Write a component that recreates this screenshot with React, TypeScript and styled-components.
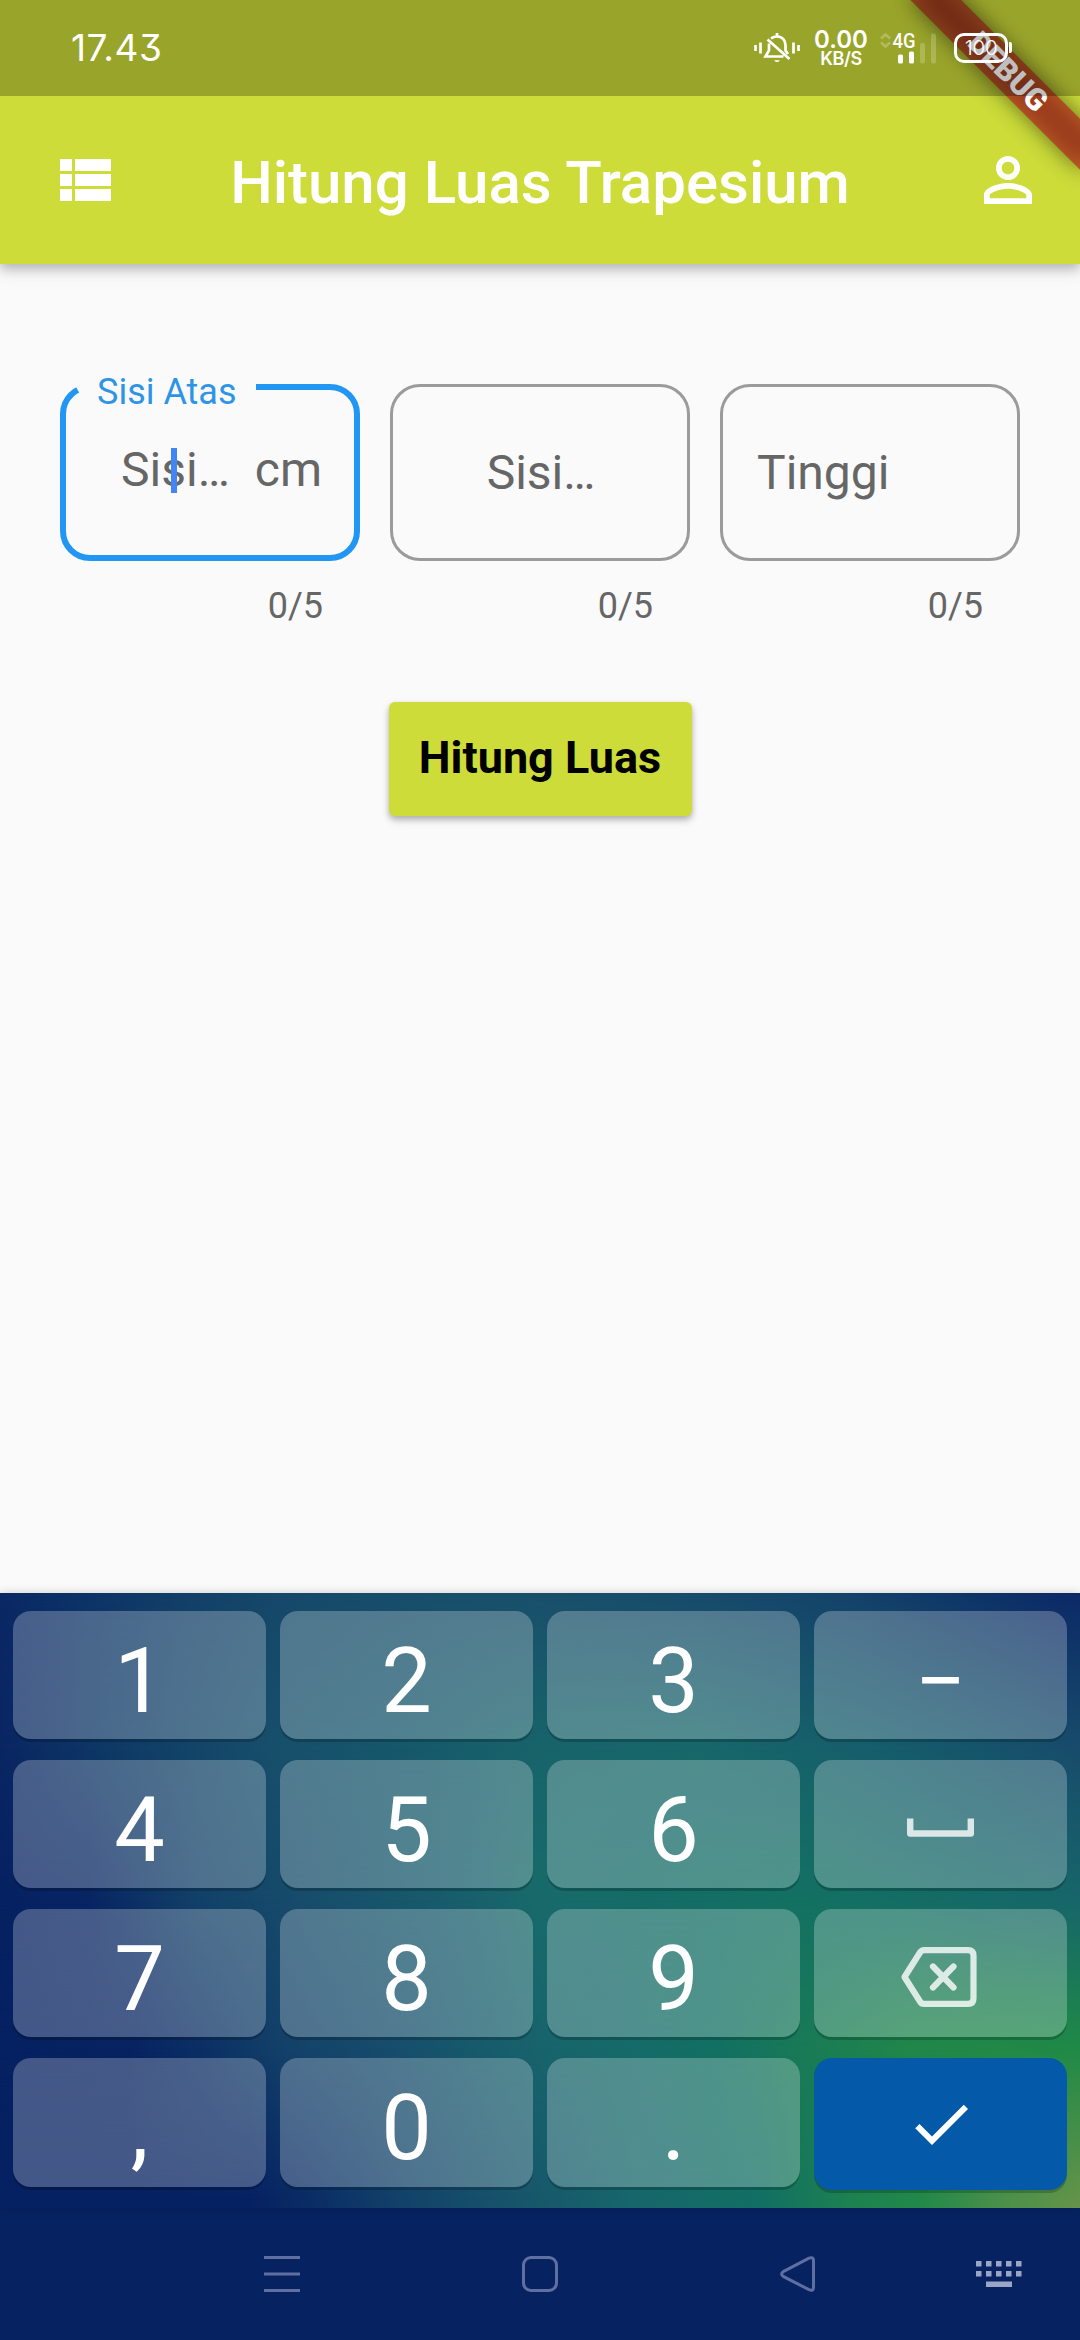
import React from "react";
import styled, { createGlobalStyle } from "styled-components";

const Global = createGlobalStyle`
  * { box-sizing: border-box; }
  html, body { margin: 0; padding: 0; background: #fafafa; }
  body { font-family: Roboto, "Noto Sans", sans-serif; }
  button { font-family: inherit; border: 0; padding: 0; margin: 0; }
  svg { display: block; }
`;

const Screen = styled.div`
  position: relative;
  width: 1080px;
  height: 2340px;
  overflow: hidden;
  display: flex;
  flex-direction: column;
  background: #fafafa;
`;

/* ---------- app bar ---------- */

const AppBar = styled.header`
  height: 264px;
  padding: 96px 36px 0 48px;
  display: flex;
  align-items: center;
  justify-content: space-between;
  background: #cddc39;
  box-shadow: 0 4px 10px rgba(0, 0, 0, 0.2), 0 9px 14px rgba(0, 0, 0, 0.1);
`;

const Title = styled.h1`
  margin: 0;
  padding: 6px 12px 0 0;
  font-size: 60px;
  line-height: 70px;
  font-weight: 500;
  color: #fff;
  white-space: nowrap;
`;

const MaterialIcon = styled.svg`
  width: 72px;
  height: 72px;
  fill: #fff;
`;

/* ---------- debug ribbon ---------- */

const RibbonCorner = styled.div`
  position: absolute;
  top: 0;
  left: 0;
  width: 1080px;
  height: 264px;
  overflow: hidden;
  pointer-events: none;
`;

const Ribbon = styled.div`
  position: absolute;
  left: 960px;
  top: 84px;
  width: 240px;
  height: 36px;
  display: flex;
  align-items: center;
  justify-content: center;
  transform-origin: 120px -84px;
  transform: rotate(45deg);
  color: #fff;
  font-size: 30.6px;
  line-height: 36px;
  font-weight: 900;

  &::before,
  &::after {
    content: "";
    position: absolute;
    inset: 0;
    z-index: -1;
  }
  &::before {
    background: rgba(0, 0, 0, 0.5);
    filter: blur(11px);
  }
  &::after {
    background: rgba(183, 28, 28, 0.63);
  }
`;

/* ---------- status bar ---------- */

const StatusBar = styled.div`
  position: absolute;
  inset: 0 0 auto 0;
  height: 96px;
  padding: 0 67px 0 71px;
  display: flex;
  align-items: center;
  justify-content: space-between;
  background: rgba(0, 0, 0, 0.25);
  color: #fff;
  font-family: Inter, Roboto, sans-serif;
`;

const Clock = styled.span`
  font-size: 37px;
  line-height: 44px;
  letter-spacing: 0.5px;
  font-feature-settings: "cv09";
`;

const StatusIcons = styled.div`
  display: flex;
  align-items: center;
`;

const NetSpeed = styled.div`
  width: 56px;
  margin-left: 13px;
  display: flex;
  flex-direction: column;
  align-items: center;
  font-weight: 600;
`;

const SpeedValue = styled.span`
  font-size: 24px;
  line-height: 19px;
`;

const SpeedUnit = styled.span`
  margin-top: 2px;
  font-size: 18px;
  line-height: 16px;
  letter-spacing: -0.4px;
`;

const Signal = styled.svg`
  width: 58px;
  height: 32px;
  margin: 0 17px 0 10px;
  overflow: visible;
`;

const Battery = styled.div`
  position: relative;
  width: 54px;
  height: 30px;
  margin-right: 5px;
  border: 3.5px solid #fff;
  border-radius: 10px;
  display: flex;
  align-items: center;
  justify-content: center;
  font-size: 20.5px;
  line-height: 20px;
  font-weight: 300;
  letter-spacing: -0.3px;

  &::after {
    content: "";
    position: absolute;
    right: -7px;
    top: 6px;
    width: 3px;
    height: 11px;
    border-radius: 0 2px 2px 0;
    background: #fff;
  }
`;

/* ---------- form ---------- */

const Form = styled.main`
  flex: 1;
  padding: 120px 60px 0;
  display: flex;
  flex-direction: column;
  align-items: center;
`;

const Fields = styled.div`
  width: 100%;
  display: grid;
  grid-template-columns: repeat(3, 300px);
  gap: 30px;
`;

const Field = styled.label`
  position: relative;
  display: flex;
  flex-direction: column;
`;

const Outline = styled.span<{ $active?: boolean }>`
  height: 177px;
  padding: ${(p) => (p.$active ? "0 32px 6px 30px" : "0 32px 0 34px")};
  display: flex;
  align-items: center;
  border: ${(p) => (p.$active ? "6px solid #2196f3" : "3px solid #9b9b9b")};
  border-radius: 30px;
  color: #666;
  font-size: 48px;
  line-height: 56px;
`;

const Hint = styled.span<{ $centered?: boolean; $shift?: number }>`
  position: relative;
  flex: 1;
  padding-left: ${(p) => p.$shift ?? 0}px;
  text-align: ${(p) => (p.$centered ? "center" : "left")};
`;

const Caret = styled.i`
  position: absolute;
  left: calc(50% - 3px);
  top: 6px;
  width: 6px;
  height: 45px;
  background: #4285f4;
`;

const Suffix = styled.span`
  margin-left: 3px;
`;

const FloatingLabel = styled.span`
  position: absolute;
  left: 16px;
  top: -13px;
  width: 180px;
  height: 42px;
  padding-left: 21px;
  background: #fafafa;
  clip-path: polygon(0 0, 0 16px, 4px 23px, 4px 42px, 100% 42px, 100% 0);
  color: #2e95e6;
  font-size: 36px;
  line-height: 42px;
`;

const Counter = styled.span`
  margin-top: 24px;
  padding-right: 37px;
  text-align: right;
  color: #666;
  font-size: 36px;
  line-height: 42px;
`;

const SubmitButton = styled.button`
  width: 303px;
  height: 114px;
  margin-top: 75px;
  padding-bottom: 3px;
  border-radius: 6px;
  background: #cddc39;
  box-shadow: 0 3px 6px rgba(0, 0, 0, 0.26), 0 6px 9px rgba(0, 0, 0, 0.08);
  color: #000;
  font-size: 45px;
  line-height: 53px;
  font-weight: 700;
  white-space: nowrap;
`;

/* ---------- keyboard ---------- */

const Keyboard = styled.section`
  position: relative;
  isolation: isolate;
  height: 615px;
  padding: 18px 13px 0;
  display: grid;
  grid-template-columns: repeat(4, 253px);
  grid-template-rows: 128px 128px 128px 129px;
  column-gap: 14px;
  row-gap: 21px;
  box-shadow: 0 0 9px rgba(0, 0, 0, 0.18);
`;

const Glow = styled.div<{ $stops: string; $from: number; $to: number }>`
  position: absolute;
  inset: 0;
  z-index: -1;
  background: linear-gradient(90deg, ${(p) => p.$stops});
  ${(p) =>
    p.$to > 0 &&
    `mask-image: linear-gradient(180deg, transparent ${p.$from}px, #000 ${p.$to}px);`}
`;

const Key = styled.button<{ $primary?: boolean }>`
  height: ${(p) => (p.$primary ? "132px" : "100%")};
  display: flex;
  align-items: center;
  justify-content: center;
  border-radius: 18px;
  background: ${(p) => (p.$primary ? "#045aa8" : "rgba(255, 255, 255, 0.25)")};
  box-shadow: 0 3px 0 rgba(0, 0, 0, 0.2);
  color: #fff;
  font-size: 90px;
  line-height: 106px;
  padding-top: ${(p) => (p.$primary ? "0" : "13px")};
`;

const SpaceIcon = styled.svg`
  width: 67px;
  height: 19px;
  margin-top: -7px;
  fill: none;
  stroke: rgba(255, 255, 255, 0.8);
  stroke-width: 6.4;
`;

const DeleteIcon = styled.svg`
  width: 78px;
  height: 60px;
  margin: -5px 3px 0 0;
  fill: none;
  stroke: rgba(255, 255, 255, 0.8);
  stroke-width: 6.2;
  stroke-linejoin: round;
  stroke-linecap: round;
`;

/* ---------- system navigation ---------- */

const NavBar = styled.nav`
  height: 132px;
  padding: 0 58px 0 264px;
  display: flex;
  align-items: center;
  background: #072261;
`;

const NavIcon = styled.svg<{ $gap: number }>`
  width: 36px;
  height: 36px;
  margin-right: ${(p) => p.$gap}px;
  fill: none;
  stroke: #5f6fa1;
  stroke-width: 3;
`;

const KeyboardIcon = styled.svg`
  width: 46px;
  height: 27px;
  fill: #9ba6c6;
`;

const glowRows: { y: number; stops: [string, number][] }[] = [
  {
    y: 0,
    stops: [["#0a2864", 0], ["#0b3066", 60], ["#123f68", 180], ["#164a6a", 300], ["#184f6b", 450], ["#194f6b", 540], ["#174b6b", 700], ["#14426a", 850], ["#0f3768", 950], ["#0c2a67", 1060]],
  },
  {
    y: 157,
    stops: [["#092662", 0], ["#0f3c66", 130], ["#174f6b", 270], ["#16586b", 400], ["#18646a", 540], ["#17686a", 700], ["#165e6b", 870], ["#16536b", 1000], ["#184c6b", 1080]],
  },
  {
    y: 307,
    stops: [["#062161", 0], ["#082563", 90], ["#124168", 200], ["#174c6b", 300], ["#17566b", 390], ["#185f6c", 470], ["#186b6a", 540], ["#146c66", 650], ["#137162", 800], ["#146b66", 960], ["#17666a", 1080]],
  },
  {
    y: 455,
    stops: [["#062161", 0], ["#072361", 130], ["#0b2f64", 200], ["#134169", 285], ["#174e6c", 400], ["#165b6b", 480], ["#18646c", 545], ["#156b68", 640], ["#127062", 719], ["#187a57", 800], ["#20874a", 910], ["#218948", 1000], ["#1f8a47", 1080]],
  },
  {
    y: 610,
    stops: [["#062161", 0], ["#062161", 250], ["#0a2c65", 310], ["#124169", 400], ["#17526b", 500], ["#17666b", 630], ["#126f64", 760], ["#1d8150", 850], ["#22884a", 920], ["#4a904a", 1000], ["#66934a", 1080]],
  },
];

export default function App() {
  return (
    <>
      <Global />
      <Screen>
        <AppBar>
          <MaterialIcon viewBox="0 0 24 24">
            <path d="M4 14h4v-4H4v4zm0 5h4v-4H4v4zM4 9h4V5H4v4zm5 5h12v-4H9v4zm0 5h12v-4H9v4zM9 5v4h12V5H9z" />
          </MaterialIcon>
          <Title>Hitung Luas Trapesium</Title>
          <MaterialIcon viewBox="0 0 24 24">
            <path d="M12 5.9c1.16 0 2.1.94 2.1 2.1s-.94 2.1-2.1 2.1S9.9 9.16 9.9 8s.94-2.1 2.1-2.1m0 9c2.97 0 6.1 1.46 6.1 2.1v1.1H5.9V17c0-.64 3.13-2.1 6.1-2.1M12 4C9.79 4 8 5.79 8 8s1.79 4 4 4 4-1.79 4-4-1.79-4-4-4zm0 9c-2.67 0-8 1.34-8 4v3h16v-3c0-2.66-5.33-4-8-4z" />
          </MaterialIcon>
        </AppBar>

        <Form>
          <Fields>
            <Field>
              <Outline $active>
                <Hint $centered $shift={3}>
                  Sisi…
                  <Caret />
                </Hint>
                <Suffix>cm</Suffix>
              </Outline>
              <FloatingLabel>Sisi Atas</FloatingLabel>
              <Counter>0/5</Counter>
            </Field>
            <Field>
              <Outline>
                <Hint $centered>Sisi…</Hint>
              </Outline>
              <Counter>0/5</Counter>
            </Field>
            <Field>
              <Outline>
                <Hint>Tinggi</Hint>
              </Outline>
              <Counter>0/5</Counter>
            </Field>
          </Fields>
          <SubmitButton>Hitung Luas</SubmitButton>
        </Form>

        <Keyboard>
          {glowRows.map((row, i) => (
            <Glow
              key={row.y}
              $stops={row.stops.map(([c, x]) => `${c} ${x}px`).join(", ")}
              $from={i ? glowRows[i - 1].y : 0}
              $to={row.y}
            />
          ))}
          <Key>1</Key>
          <Key>2</Key>
          <Key>3</Key>
          <Key>−</Key>
          <Key>4</Key>
          <Key>5</Key>
          <Key>6</Key>
          <Key>
            <SpaceIcon viewBox="0 0 67 19">
              <path d="M3.2 0.5V15.5H63.8V0.5" strokeLinejoin="round" />
            </SpaceIcon>
          </Key>
          <Key>7</Key>
          <Key>8</Key>
          <Key>9</Key>
          <Key>
            <DeleteIcon viewBox="0 0 78 60">
              <path d="M24 3.1H68Q73.5 3.1 73.5 8.5V51.5Q73.5 56.9 68 56.9H24Q21.5 56.9 20 54.5L4.5 30L20 5.5Q21.5 3.1 24 3.1Z" />
              <path d="M33 19.500L53.500 40.500M53.500 19.500L33 40.500" />
            </DeleteIcon>
          </Key>
          <Key>,</Key>
          <Key>0</Key>
          <Key>.</Key>
          <Key $primary>
            <MaterialIcon viewBox="0 0 24 24">
              <path d="M9 16.17L4.83 12l-1.42 1.41L9 19 21 7l-1.41-1.41z" />
            </MaterialIcon>
          </Key>
        </Keyboard>

        <NavBar>
          <NavIcon $gap={222} viewBox="0 0 36 36">
            <path d="M0 1.5H36M0 18H36M0 34.5H36" />
          </NavIcon>
          <NavIcon $gap={222} viewBox="0 0 36 36">
            <rect x="1.5" y="1.5" width="33" height="33" rx="7.5" />
          </NavIcon>
          <NavIcon $gap={160} viewBox="0 0 36 36">
            <path d="M3.2 15.6L29 2.1Q33.5 0.5 33.5 4.5V31.5Q33.5 35.5 29 33.7L3.2 20.4Q0 18 3.2 15.6Z" />
          </NavIcon>
          <KeyboardIcon viewBox="0 0 46 27">
            {[0, 10, 20, 30, 40].map((x) => (
              <React.Fragment key={x}>
                <rect x={x} y="0" width="5.5" height="5.5" />
                <rect x={x} y="10" width="5.5" height="5.5" />
              </React.Fragment>
            ))}
            <rect x="10" y="20.5" width="26" height="5.5" />
          </KeyboardIcon>
        </NavBar>

        <RibbonCorner>
          <Ribbon>DEBUG</Ribbon>
        </RibbonCorner>

        <StatusBar>
          <Clock>17.43</Clock>
          <StatusIcons>
            <svg width="46" height="30" viewBox="0 0 46 30" fill="none" stroke="#fff" strokeWidth="2.7">
              <path d="M1.5 12v6M6.5 9.5v11M39.5 9.5v11M44.5 12v6" />
              <path d="M17 5.5C19 4 21 3.5 23 3.5C28.5 3.5 31.5 7.5 31.5 12V17.5L34 21" />
              <path d="M15 10.5V17.5L11.5 23.5H29.5M23 0V4M13.5 6.5L35.5 26" />
              <path d="M20 27.2H26Q23 31 20 27.2Z" fill="#fff" stroke="none" />
            </svg>
            <NetSpeed>
              <SpeedValue>0.00</SpeedValue>
              <SpeedUnit>KB/S</SpeedUnit>
            </NetSpeed>
            <Signal viewBox="0 0 58 32">
              <path d="M2 6.5L6.5 2.5L11 6.5M2 10.5L6.5 14.500L11 10.5" fill="none" stroke="#fff" strokeOpacity="0.25" strokeWidth="2.6" />
              <text x="13.5" y="16" fill="#fff" fontSize="20" fontWeight="500" fontFamily="Roboto" textLength="23" lengthAdjust="spacingAndGlyphs">4G</text>
              <rect x="19" y="22.5" width="5" height="9" rx="1.5" fill="#fff" />
              <rect x="30" y="19.5" width="5" height="12" rx="1.5" fill="#fff" />
              <rect x="41" y="11" width="5" height="20.5" rx="2" fill="#fff" fillOpacity="0.2" />
              <rect x="52" y="1.5" width="5" height="30" rx="2" fill="#fff" fillOpacity="0.2" />
            </Signal>
            <Battery>100</Battery>
          </StatusIcons>
        </StatusBar>
      </Screen>
    </>
  );
}
